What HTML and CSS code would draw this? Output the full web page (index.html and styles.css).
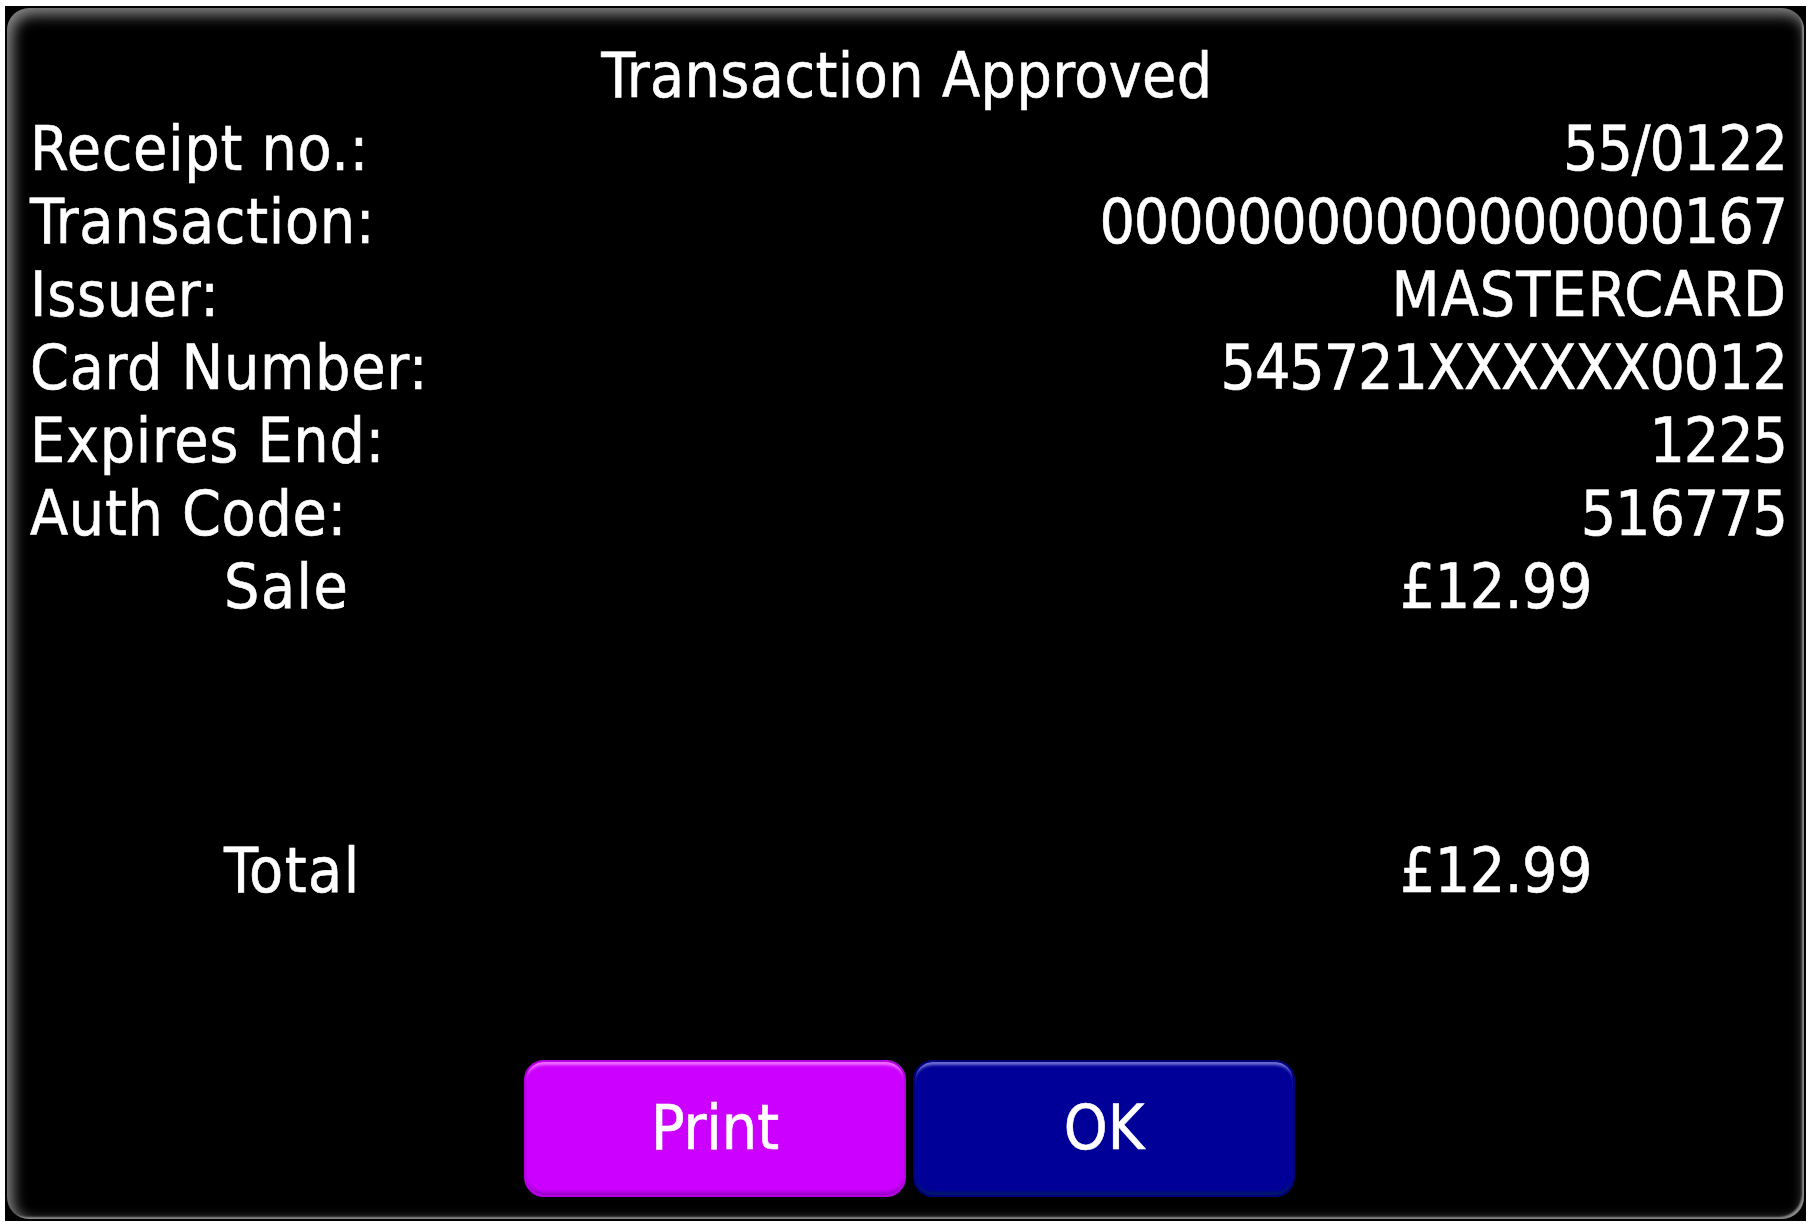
FILE: index.html
```html
<!DOCTYPE html>
<html lang="en">

<head>
    <meta charset="UTF-8">
    <meta name="viewport" content="width=device-width, initial-scale=1.0">
    <title>Transaction Approved</title>
    <link rel="stylesheet" href="styles.css">
</head>

<body>
    <div class="frame">
        <div class="screen">
            <h1 class="title">Transaction Approved</h1>
            <div class="details">
                <div class="row"><span class="label">Receipt no.:</span><span class="value">55/0122</span></div>
                <div class="row"><span class="label">Transaction:</span><span class="value">00000000000000000167</span></div>
                <div class="row"><span class="label">Issuer:</span><span class="value text">MASTERCARD</span></div>
                <div class="row"><span class="label">Card Number:</span><span class="value">545721XXXXXX0012</span></div>
                <div class="row"><span class="label">Expires End:</span><span class="value">1225</span></div>
                <div class="row"><span class="label">Auth Code:</span><span class="value">516775</span></div>
            </div>
            <div class="amount-row"><span class="label">Sale</span><span class="value">£12.99</span></div>
            <div class="amount-row total"><span class="label">Total</span><span class="value">£12.99</span></div>
            <div class="buttons">
                <button class="btn btn-print">Print</button>
                <button class="btn btn-ok">OK</button>
            </div>
        </div>
    </div>
</body>

</html>
```

FILE: styles.css
```css
body {
    margin: 0;
    padding: 0;
    background-color: #fff;
    font-family: "DejaVu Sans Condensed", "DejaVu Sans", sans-serif;
    font-stretch: condensed;
    color: #fff;
}

.frame {
    width: 1801px;
    height: 1215px;
    margin: 6px 0 0 5px;
    padding: 2px;
    box-sizing: border-box;
    background-color: #000;
}

.screen {
    height: 100%;
    box-sizing: border-box;
    padding: 31px 0 22px 0;
    border-radius: 22px;
    background-color: #000;
    box-shadow: inset 4px 5px 14px 2px rgba(140, 140, 140, 0.95),
        inset -3px -3px 2px -1px rgba(150, 150, 150, 0.9);
    display: flex;
    flex-direction: column;
    font-size: 62px;
    line-height: 73px;
    -webkit-text-stroke: 0.6px #fff;
}

.title {
    margin: 0;
    font-size: 62px;
    font-weight: normal;
    text-align: center;
    padding-left: 3px;
    letter-spacing: 0.4px;
}

.row {
    display: flex;
    justify-content: space-between;
    padding: 0 17px 0 23px;
}

.label {
    letter-spacing: 0.7px;
}

.value {
    letter-spacing: -1.1px;
}

.value.text {
    letter-spacing: 1px;
}

.amount-row {
    display: flex;
    justify-content: space-between;
    padding: 0 212px 0 217px;
}

.amount-row .label {
    letter-spacing: 1.5px;
}

.amount-row .value {
    letter-spacing: -0.5px;
}

.amount-row.total {
    margin-top: 211px;
}

.buttons {
    margin-top: auto;
    display: flex;
    justify-content: center;
    gap: 7px;
    padding-left: 8px;
}

.btn {
    width: 382px;
    height: 137px;
    box-sizing: border-box;
    padding: 0 0 6px 0;
    border-radius: 20px;
    font-family: inherit;
    font-stretch: condensed;
    font-size: 62px;
    line-height: 131px;
    color: #fff;
    -webkit-text-stroke: 0.6px #fff;
    cursor: pointer;
}

.btn-print {
    background-color: #cc00ff;
    border: 2px solid #b400e0;
    box-shadow: inset 0 5px 3px -2px rgba(255, 160, 255, 0.7),
        inset 0 -4px 3px -1px rgba(110, 0, 150, 0.5);
}

.btn-ok {
    background-color: #000099;
    border: 2px solid #00007a;
    box-shadow: inset 0 5px 3px -2px rgba(150, 150, 230, 0.75),
        inset 0 -4px 3px -1px rgba(0, 40, 70, 0.6);
}
```
